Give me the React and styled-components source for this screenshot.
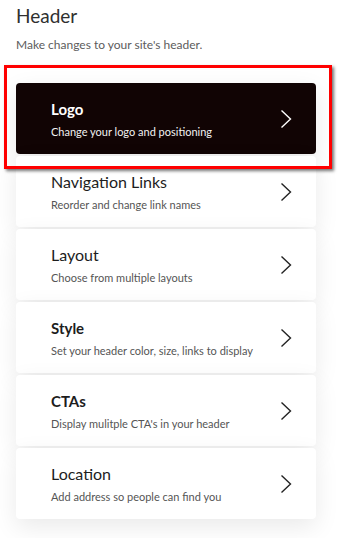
import React from "react";
import styled, { createGlobalStyle } from "styled-components";

const GlobalStyle = createGlobalStyle`
  body {
    margin: 0;
    background: #fff;
    font-family: "Lato", "Open Sans", sans-serif;
  }
`;

const Page = styled.div`
  width: 346px;
  height: 538px;
  overflow: hidden;
  padding: 4px 30px 0 16px;
  box-sizing: border-box;
`;

const Title = styled.h1`
  margin: 0;
  font-size: 19px;
  line-height: 23px;
  font-weight: 400;
  color: #2f2f2f;
`;

const Intro = styled.p`
  margin: 10px 0 0;
  font-size: 12px;
  line-height: 16px;
  color: #5c5c5c;
`;

const List = styled.div`
  margin-top: 30px;
  display: flex;
  flex-direction: column;
  gap: 2px;
`;

const Card = styled.div`
  position: relative;
  height: 71px;
  display: flex;
  align-items: center;
  justify-content: space-between;
  padding: 1px 24px 0 35px;
  box-sizing: border-box;
  border-radius: 4px;
  background: ${(props) => (props.active ? "#110404" : "#fff")};
  color: ${(props) => (props.active ? "#fff" : "#1d1d1d")};
  box-shadow: 0 8px 24px rgba(0, 0, 0, 0.085);
`;

const Text = styled.div`
  display: flex;
  flex-direction: column;
`;

const CardTitle = styled.span`
  font-size: ${(props) => (props.bold ? "15px" : "16px")};
  line-height: 18px;
  font-weight: ${(props) => (props.bold ? 700 : 400)};
`;

const CardSub = styled.span`
  margin-top: 7px;
  font-size: 11px;
  line-height: 14px;
  color: ${(props) => (props.active ? "#f2f2f2" : "#555")};
`;

const Highlight = styled.div`
  position: absolute;
  top: -18px;
  left: -12px;
  right: -16px;
  bottom: -15px;
  border: 3px solid #ff0000;
  box-shadow: 2px 2px 3px rgba(0, 0, 0, 0.55);
  pointer-events: none;
  z-index: 5;
`;

const Chevron = ({ color }) => (
  <svg width="12" height="20" viewBox="0 0 12 20" fill="none">
    <path
      d="M1.5 1.5 L10.5 10 L1.5 18.5"
      stroke={color}
      strokeWidth="1.4"
      strokeLinejoin="miter"
    />
  </svg>
);

const items = [
  { title: "Logo", sub: "Change your logo and positioning", bold: true, active: true },
  { title: "Navigation Links", sub: "Reorder and change link names" },
  { title: "Layout", sub: "Choose from multiple layouts" },
  { title: "Style", sub: "Set your header color, size, links to display", bold: true },
  { title: "CTAs", sub: "Display mulitple CTA's in your header", bold: true },
  { title: "Location", sub: "Add address so people can find you" },
];

const App = () => (
  <>
    <GlobalStyle />
    <Page>
      <Title>Header</Title>
      <Intro>Make changes to your site's header.</Intro>
      <List>
        {items.map((item) => (
          <Card key={item.title} active={item.active}>
            <Text>
              <CardTitle bold={item.bold}>{item.title}</CardTitle>
              <CardSub active={item.active}>{item.sub}</CardSub>
            </Text>
            <Chevron color={item.active ? "#fff" : "#222"} />
            {item.active && <Highlight />}
          </Card>
        ))}
      </List>
    </Page>
  </>
);

export default App;
